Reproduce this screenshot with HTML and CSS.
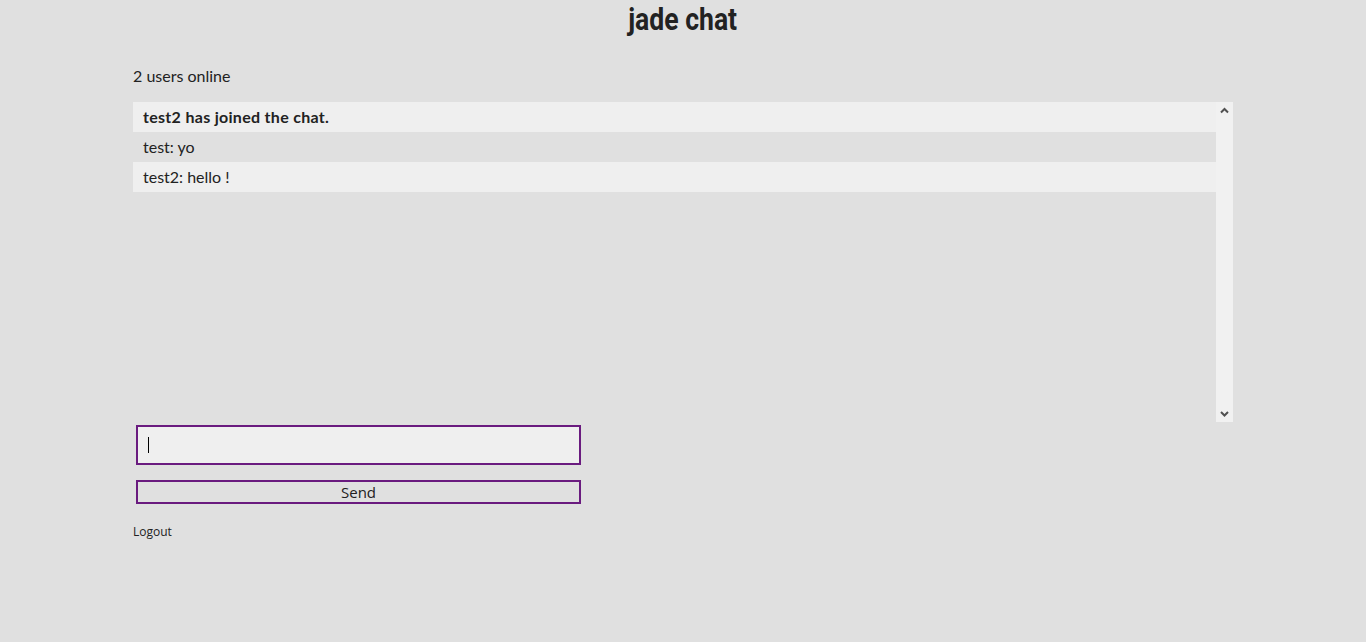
FILE: index.html
```html
<!DOCTYPE html>
<html>
<head>
<meta charset="utf-8">
<title>jade chat</title>
<link rel="stylesheet" href="styles.css">
</head>
<body>
<header class="head"><h1 class="title">jade chat</h1></header>
<main class="wrap">
  <p class="online">2 users online</p>
  <div class="chat">
    <ul class="messages">
      <li class="msg alt bold">test2 has joined the chat.</li>
      <li class="msg">test: yo</li>
      <li class="msg alt">test2: hello !</li>
    </ul>
    <div class="scrollbar">
      <svg class="arrow" width="17" height="17" viewBox="0 0 17 17"><path d="M5 10.5 L8.5 7 L12 10.5" fill="none" stroke="#505050" stroke-width="2"/></svg>
      <svg class="arrow" width="17" height="17" viewBox="0 0 17 17"><path d="M5 7 L8.5 10.5 L12 7" fill="none" stroke="#505050" stroke-width="2"/></svg>
    </div>
  </div>
  <form class="form">
    <div class="field-wrap">
      <input class="field" type="text">
      <span class="caret"></span>
    </div>
    <button class="send" type="button">Send</button>
  </form>
  <a class="logout" href="#">Logout</a>
</main>
</body>
</html>
```
FILE: styles.css
```css
html, body {
  margin: 0;
  padding: 0;
  background: #e0e0e0;
  color: #222;
  font-family: Lato, "Noto Sans", sans-serif;
  font-size: 16px;
}
.head {
  height: 44px;
  text-align: center;
}
.title {
  display: inline-block;
  margin: 0;
  font-family: Roboto, sans-serif;
  font-weight: bold;
  font-size: 32px;
  line-height: 38px;
  color: #222;
  transform: scaleX(0.83);
}
.wrap {
  width: 1100px;
  margin: 0 auto;
}
.online {
  margin: 17px 0 11px;
  line-height: 30px;
}
.chat {
  display: flex;
  height: 320px;
}
.messages {
  flex: 1;
  margin: 0;
  padding: 0;
  list-style: none;
}
.msg {
  height: 30px;
  line-height: 30px;
  padding-left: 10px;
}
.alt { background: #efefef; }
.bold { font-weight: bold; letter-spacing: 0.3px; }
.scrollbar {
  width: 17px;
  background: #f1f1f1;
  display: flex;
  flex-direction: column;
  justify-content: space-between;
}
.arrow { display: block; }
.form {
  display: flex;
  flex-direction: column;
  gap: 15px;
  padding: 3px 0 0 3px;
  width: 445px;
}
.field-wrap {
  position: relative;
  height: 40px;
}
.field {
  box-sizing: border-box;
  display: block;
  height: 40px;
  width: 445px;
  margin: 0;
  border: 2px solid #6a1b7f;
  background: #efefef;
  padding: 0 10px;
  font: inherit;
  outline: none;
  caret-color: transparent;
}
.caret {
  position: absolute;
  left: 12px;
  top: 12px;
  width: 1px;
  height: 16px;
  background: #000;
}
.send {
  box-sizing: border-box;
  height: 24px;
  width: 445px;
  margin: 0;
  border: 2px solid #6a1b7f;
  background: #e0e0e0;
  font-family: "Open Sans", sans-serif;
  font-size: 15px;
  line-height: 18px;
  color: #222;
  padding: 0;
}
.logout {
  display: inline-block;
  margin-top: 19px;
  font-family: "Open Sans", sans-serif;
  font-size: 12px;
  color: #222;
  text-decoration: none;
}
```
